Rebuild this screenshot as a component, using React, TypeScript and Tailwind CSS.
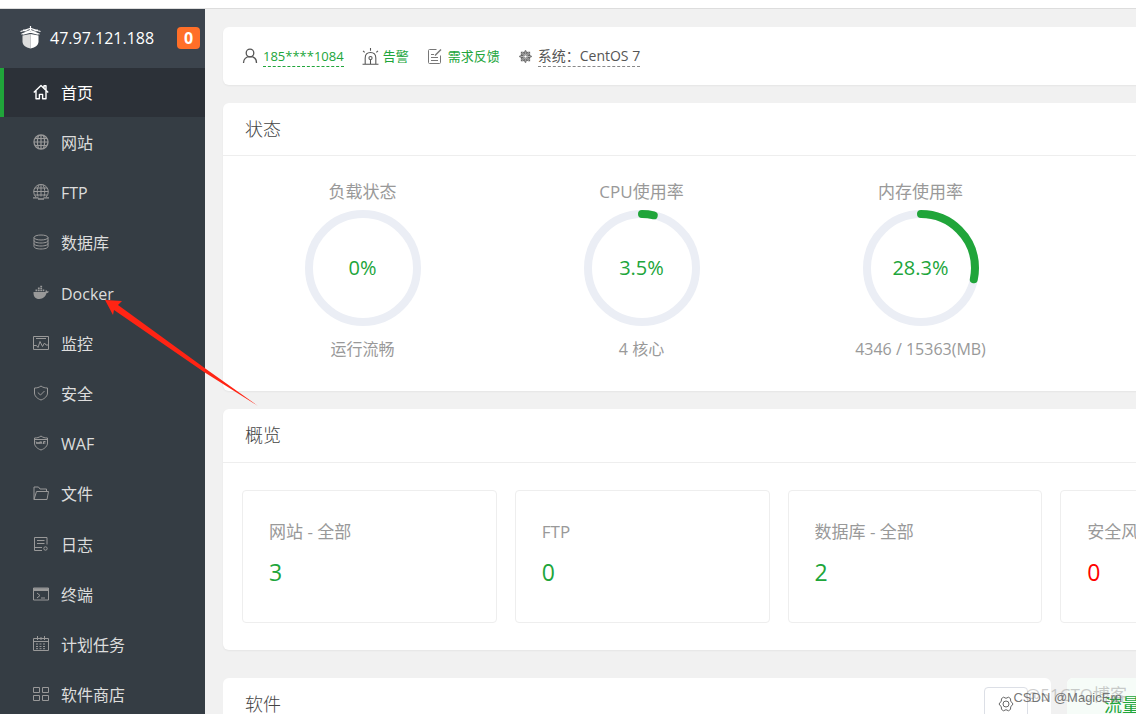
import type { ReactNode } from 'react';
import { FaCentos } from 'react-icons/fa';

function Icon({ children, size = 16 }: { children: ReactNode; size?: number }) {
  return (
    <svg
      width={size}
      height={size}
      viewBox="0 0 16 16"
      fill="none"
      stroke="currentColor"
      strokeWidth={1}
      strokeLinejoin="round"
      className="shrink-0"
      aria-hidden="true"
    >
      {children}
    </svg>
  );
}

const icons = {
  home: (
    <Icon>
      <path strokeWidth={1.4} d="M.8 8.4 8 1.4l7.2 7M3 7v7.8h3.4v-4.4h3.2v4.4H13V7M11 4V1.8h2V6" />
    </Icon>
  ),
  site: (
    <Icon>
      <circle cx="8" cy="8" r="7" strokeWidth={1.3} />
      <path strokeWidth={1.2} d="M5.500 1.500C4.300 5 4.300 11 5.500 14.500M10.500 1.500c1.200 3.500 1.200 9.500 0 13M8 1v14M1 8h14M2 4.500h12M2 11.500h12" />
    </Icon>
  ),
  ftp: (
    <Icon>
      <path d="M3 13A7.300 7.300 0 1 1 13 13M5 12.500C3.800 9 4 4 6 1M11 12.500C12.200 9 12 4 10 1M8 .5v12M.7 7.500h14.600M2 4h12M1.500 11h13" />
      <path strokeWidth={1.3} d="M0 13.800h5.500M10.500 13.800H16M5 15h6" />
    </Icon>
  ),
  database: (
    <Icon>
      <ellipse cx="8" cy="3.500" rx="7" ry="2.500" />
      <path d="M1 3.500v9C1 14 4 15 8 15s7-1 7-2.500v-9M1 6.500C1 8 4 9 8 9s7-1 7-2.500M1 9.500C1 11 4 12 8 12s7-1 7-2.500" />
    </Icon>
  ),
  docker: (
    <Icon>
      <path
        fill="currentColor"
        stroke="none"
        d="M.5 7h11.700c.6-.4.7-1.300.5-2.200.8.4 1.200.9 1.400 1.600.6-.1 1.200 0 1.700.3-.4.9-1.200 1.300-2.200 1.400C12.500 11.800 10 14 6.300 14 2.300 14 .3 11.500.5 7ZM2.500 4.600h1.800v1.700H2.500zM4.900 4.600h1.800v1.700H4.900zM7.300 4.600h1.800v1.700H7.300zM9.700 4.600h1.600v1.700H9.700zM4.900 2.600h1.800v1.400H4.900zM7.300 2.600h1.800v1.400H7.300zM7.300.8h1.800V2H7.300z"
      />
    </Icon>
  ),
  monitor: (
    <Icon>
      <path d="M.5 1.500h15v13H.5zM3 3.500h10M1 10.500h2.500l1.500 2 2-6 2.500 5 2-3.500 1.500 2H15" />
    </Icon>
  ),
  security: (
    <Icon>
      <path d="M8 1c2 1.500 4 2 6.500 2v5c0 3-2.500 5.500-6.500 7-4-1.500-6.500-4-6.500-7V3C4 3 6 2.500 8 1ZM4.800 7.500 7.500 10l4-4" />
    </Icon>
  ),
  waf: (
    <Icon>
      <path d="M8 1c2 1.500 4 2 6.500 2v5c0 3-2.500 5.500-6.500 7-4-1.500-6.500-4-6.500-7V3C4 3 6 2.500 8 1ZM2 4.500h12" />
      <path d="m3 6.500 1 2.500 1-2 1 2 1-2.500M7 9l1-2.500L9 9M10.500 9V6.500h2M10.500 8h2" />
    </Icon>
  ),
  files: (
    <Icon>
      <path d="M1 14.500V2h4.500L7 4h6.500v2.500M1 14.500 3.500 6.500h12l-1.500 8Z" />
    </Icon>
  ),
  logs: (
    <Icon>
      <path d="M14 8.500V1.500H1.500v13H9M4 4.500h7.500M4 7.500h7.500M2 11.500h7" />
      <circle cx="12.500" cy="12.500" r="1.700" />
    </Icon>
  ),
  terminal: (
    <Icon>
      <path d="M.5 2h15v12H.5zM.5 4.500h15M4 7l3 2.500L4 12M8 12h4" />
      <path strokeWidth={2} d="M1 3.200h14" />
    </Icon>
  ),
  cron: (
    <Icon>
      <path d="M.5 2.500h15v12H.5zM.5 5.500h15M4.500 0v4M8 1v3M11.500 0v4" />
      <path strokeDasharray="2 1.500" d="M3 8h10.500M3 10.500h10.500M3 12.700h10.500" />
    </Icon>
  ),
  store: (
    <Icon>
      <path d="M.5 1.500h6v5h-6zM9.500 1.500h6v5h-6zM.5 9.500h6v5h-6zM9.500 9.500h6v5h-6z" />
    </Icon>
  ),
};

const menu = [
  { label: '首页', icon: icons.home, active: true },
  { label: '网站', icon: icons.site },
  { label: 'FTP', icon: icons.ftp },
  { label: '数据库', icon: icons.database },
  { label: 'Docker', icon: icons.docker },
  { label: '监控', icon: icons.monitor },
  { label: '安全', icon: icons.security },
  { label: 'WAF', icon: icons.waf },
  { label: '文件', icon: icons.files },
  { label: '日志', icon: icons.logs },
  { label: '终端', icon: icons.terminal },
  { label: '计划任务', icon: icons.cron },
  { label: '软件商店', icon: icons.store },
];

const gauges = [
  { label: '负载状态', value: 0, note: '运行流畅' },
  { label: 'CPU使用率', value: 3.5, note: '4 核心' },
  { label: '内存使用率', value: 28.3, note: '4346 / 15363(MB)' },
];

const totals = [
  { label: '网站 - 全部', value: 3 },
  { label: 'FTP', value: 0 },
  { label: '数据库 - 全部', value: 2 },
  { label: '安全风险', value: 0, danger: true },
];

function Logo() {
  return (
    <svg width="21" height="23" viewBox="0 0 21 23" className="shrink-0" aria-hidden="true">
      <g fill="none" stroke="#fff" strokeWidth="1.200">
        <path d="M10.500 0v4M.5 5.500l10-3 10 3M1.500 8.300l9-3.800 9 3.800M3 4.200l15 4M18 4.200l-15 4" />
      </g>
      <path fill="#ddd" d="M2.500 9.500 10.500 8v14.500c-5-1-8-3.500-8-7Z" />
      <path fill="#fff" d="M18.500 9.500 10.500 8v14.500c5-1 8-3.500 8-7Z" />
    </svg>
  );
}

function Sidebar() {
  return (
    <aside className="flex w-[205px] shrink-0 flex-col overflow-hidden bg-[#353d44] text-[16px]">
      <div className="flex h-[59px] shrink-0 items-center bg-[#3c444d] pb-0.5 pl-5 pr-[5px] text-white">
        <Logo />
        <span className="ml-[9px]">47.97.121.188</span>
        <span className="ml-auto flex h-[22px] w-[23px] items-center justify-center rounded bg-[#ff6f28] font-bold">0</span>
      </div>
      <nav className="-mb-[7px] flex flex-1 flex-col">
        {menu.map((item) => (
          <a
            key={item.label}
            href="#"
            className={
              item.active
                ? 'mb-px flex flex-1 items-center gap-3 border-l-4 border-[#20a53a] bg-[#2c3138] pl-[29px] text-white'
                : 'mb-px flex flex-1 items-center gap-3 border-l-4 border-transparent pl-[29px] text-[#ddd]'
            }
          >
            <span className={item.active ? 'pb-0.5 text-white' : 'pb-0.5 text-[#999]'}>{item.icon}</span>
            <span>{item.label}</span>
          </a>
        ))}
      </nav>
    </aside>
  );
}

function InfoBar() {
  return (
    <section className="flex h-[58px] items-center rounded-md bg-white pl-[19px] text-[13px] leading-5 text-[#555] shadow-xs">
      <Icon>
        <circle cx="8" cy="5" r="3.800" strokeWidth={1.300} />
        <path strokeWidth={1.300} d="M1.500 15c0-4 2.500-6.300 6.500-6.300s6.500 2.300 6.500 6.300" />
      </Icon>
      <a href="#" className="ml-[5px] border-b border-dashed border-[#20a53a] text-[#20a53a]">
        185****1084
      </a>
      <a href="#" className="ml-[18px] flex items-center gap-1 text-[#20a53a]">
        <span className="text-[#555]">
          <Icon size={17}>
            <path d="M3 15V9.500C3 6 5 4.300 8 4.300S13 6 13 9.500V15M.5 15.300h15M8 0v2.500M1 2.700l1.500 1.500M15 2.700l-1.500 1.500M8 11v4" />
            <circle cx="8" cy="9.500" r="1.500" />
          </Icon>
        </span>
        告警
      </a>
      <a href="#" className="ml-[18px] flex items-center gap-[5px] text-[#20a53a]">
        <span className="text-[#777]">
          <Icon>
            <path d="M9.500 1.500h-7c-.6 0-1 .4-1 1v12c0 .6.4 1 1 1h10c.6 0 1-.4 1-1v-7M4 9.500h7M4 12.500h7M4 6.500h3" />
            <path strokeWidth={1.500} d="m8 7.500 6-6" />
          </Icon>
        </span>
        需求反馈
      </a>
      <FaCentos size={15} className="ml-[18px] text-[#666]" aria-hidden="true" />
      <span className="ml-[5px] border-b border-dashed border-[#888] text-[14px]">系统：CentOS 7</span>
    </section>
  );
}

function Gauge({ label, value, note }: { label: string; value: number; note: string }) {
  const r = 54;
  const length = 2 * Math.PI * r;
  return (
    <div className="flex flex-col items-center text-[#999]">
      <div className="text-[17px] leading-6">{label}</div>
      <div className="mt-[6px] grid place-items-center">
        <svg width="116" height="116" viewBox="0 0 116 116" fill="none" strokeWidth="8" className="col-start-1 row-start-1">
          <circle cx="58" cy="58" r={r} stroke="#ebeef5" />
          {value > 0 && (
            <circle
              cx="58"
              cy="58"
              r={r}
              stroke="#20a53a"
              strokeLinecap="round"
              strokeDasharray={`${(length * value) / 100} ${length}`}
              transform="rotate(-90 58 58)"
            />
          )}
        </svg>
        <span className="col-start-1 row-start-1 text-[20px] text-[#20a53a]">{value}%</span>
      </div>
      <div className="mt-[11px] text-[16px] leading-6">{note}</div>
    </div>
  );
}

function StatusPanel() {
  return (
    <section className="mt-[18px] rounded-md bg-white pb-[30px] shadow-xs">
      <h2 className="h-[53px] border-b border-[#eee] pl-[22px] text-[18px] font-light leading-[52px] text-[#444]">状态</h2>
      <div className="grid grid-cols-4 pt-6">
        {gauges.map((gauge) => (
          <Gauge key={gauge.label} {...gauge} />
        ))}
      </div>
    </section>
  );
}

function OverviewPanel() {
  return (
    <section className="mt-[18px] rounded-md bg-white shadow-xs">
      <h2 className="h-[54px] border-b border-[#eee] pl-[22px] text-[18px] font-light leading-[53px] text-[#444]">概览</h2>
      <div className="grid grid-cols-4 gap-[18px] py-[27px] pl-[19px] pr-6">
        {totals.map((item) => (
          <div key={item.label} className="h-[133px] rounded-sm border border-[#eee] pl-[26px] pt-[27px]">
            <div className="text-[17px] leading-7 text-[#999]">{item.label}</div>
            <a
              href="#"
              className={item.danger ? 'mt-2 block text-[23px] leading-9 text-[#f00]' : 'mt-2 block text-[23px] leading-9 text-[#20a53a]'}
            >
              {item.value}
            </a>
          </div>
        ))}
      </div>
    </section>
  );
}

function BottomRow() {
  return (
    <div className="mt-7 flex gap-4">
      <section className="flex h-[400px] flex-1 items-start rounded-md bg-white pl-[22px] pr-[23px]">
        <h2 className="text-[18px] font-light leading-[52px] text-[#444]">软件</h2>
        <button
          type="button"
          aria-label="设置"
          className="ml-auto mt-[9px] flex h-[34px] w-11 items-center justify-center rounded-sm border border-[#dcdfe6] text-[#666]"
        >
          <Icon>
            <path d="M5.500 1.200 8 2.300l2.500-1.100 2 1.400.2 2.500L15 8l-2.300 2.900-.2 2.500-2 1.400L8 13.700l-2.500 1.100-2-1.400-.2-2.500L1 8l2.300-2.900.2-2.500Z" />
            <circle cx="8" cy="8" r="3" />
          </Icon>
        </button>
      </section>
      <section className="h-[400px] w-[272px] rounded-md bg-white">
        <button type="button" className="h-[54px] w-[110px] rounded-tl-md bg-[#f6fcf8] text-[18px] text-[#20a53a]">
          流量
        </button>
      </section>
    </div>
  );
}

export default function App() {
  return (
    <div className="relative flex h-screen flex-col overflow-hidden bg-[#f1f1f1] font-['Open_Sans','Noto_Sans_CJK_SC',sans-serif]">
      <div className="h-[9px] shrink-0 border-b border-[#ddd] bg-white" />
      <div className="flex min-h-0 flex-1">
        <Sidebar />
        <main className="min-w-[1152px] flex-1 px-[18px] pt-[18px]">
          <InfoBar />
          <StatusPanel />
          <OverviewPanel />
          <BottomRow />
        </main>
      </div>

      {/* arrow pointing at the Docker entry */}
      <svg className="pointer-events-none absolute left-[100px] top-[294px]" width="160" height="114" viewBox="100 294 160 114" aria-hidden="true">
        <path fill="#ff2414" d="m105 300 17 1-4 4 88 64 52 37-54-34-90-62-1 5Z" />
      </svg>

      <span className="pointer-events-none absolute bottom-[7px] right-[9px] text-[17px] leading-6 text-[#999]/50">@51CTO博客</span>
      <span className="pointer-events-none absolute bottom-[6px] right-[14px] font-['Liberation_Sans',sans-serif] text-[13px] leading-5 text-[#666]/90">
        CSDN @MagicErn
      </span>
    </div>
  );
}
